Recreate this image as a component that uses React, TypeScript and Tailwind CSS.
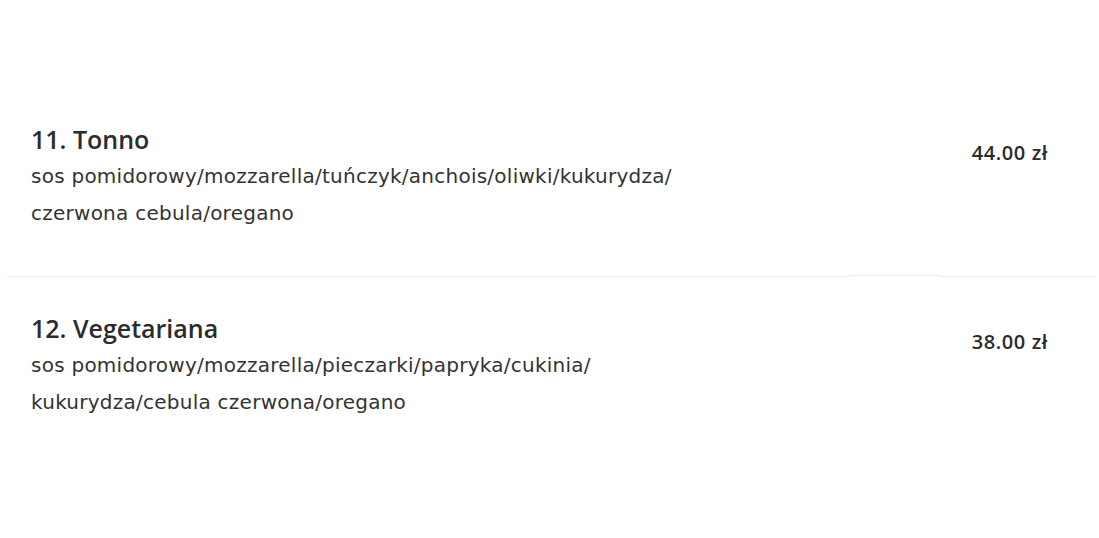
import React from "react";

const items = [
  {
    name: "11. Tonno",
    lines: ["sos pomidorowy/mozzarella/tuńczyk/anchois/oliwki/kukurydza/", "czerwona cebula/oregano"],
    price: "44.00 zł",
  },
  {
    name: "12. Vegetariana",
    lines: ["sos pomidorowy/mozzarella/pieczarki/papryka/cukinia/", "kukurydza/cebula czerwona/oregano"],
    price: "38.00 zł",
  },
];

function Item({ it }: { it: (typeof items)[number] }) {
  return (
    <div className="flex justify-between pl-[31px] pr-[51px] pt-[34px] pb-[43px]">
      <div className="flex flex-col">
        <div className="text-[25px] leading-[34px] font-semibold text-[#2b2b2b]" style={{ fontFamily: '"Open Sans", sans-serif' }}>{it.name}</div>
        <div className="mt-[2px] text-[20px] leading-[37px] text-[#333333] tracking-[0.25px]" style={{ fontFamily: '"DejaVu Sans", sans-serif' }}>
          {it.lines.map((l, i) => (
            <div key={i}>{l}</div>
          ))}
        </div>
      </div>
      <div className="pt-[18px] text-[20px] leading-[26px] font-semibold text-[#2b2b2b] tracking-[0.6px]" style={{ fontFamily: '"Open Sans", sans-serif' }}>{it.price}</div>
    </div>
  );
}

export default function App() {
  return (
    <div className="w-[1099px] h-[538px] bg-white pt-[88px]">
      <Item it={items[0]} />
      <div className="flex items-start h-[2px]">
        <div className="ml-[7px] w-[843px] h-px bg-[#ececec] mt-[1px]" />
        <div className="w-[90px] h-px bg-[#ececec]" />
        <div className="w-[156px] h-px bg-[#ececec] mt-[1px]" />
      </div>
      <Item it={items[1]} />
    </div>
  );
}
